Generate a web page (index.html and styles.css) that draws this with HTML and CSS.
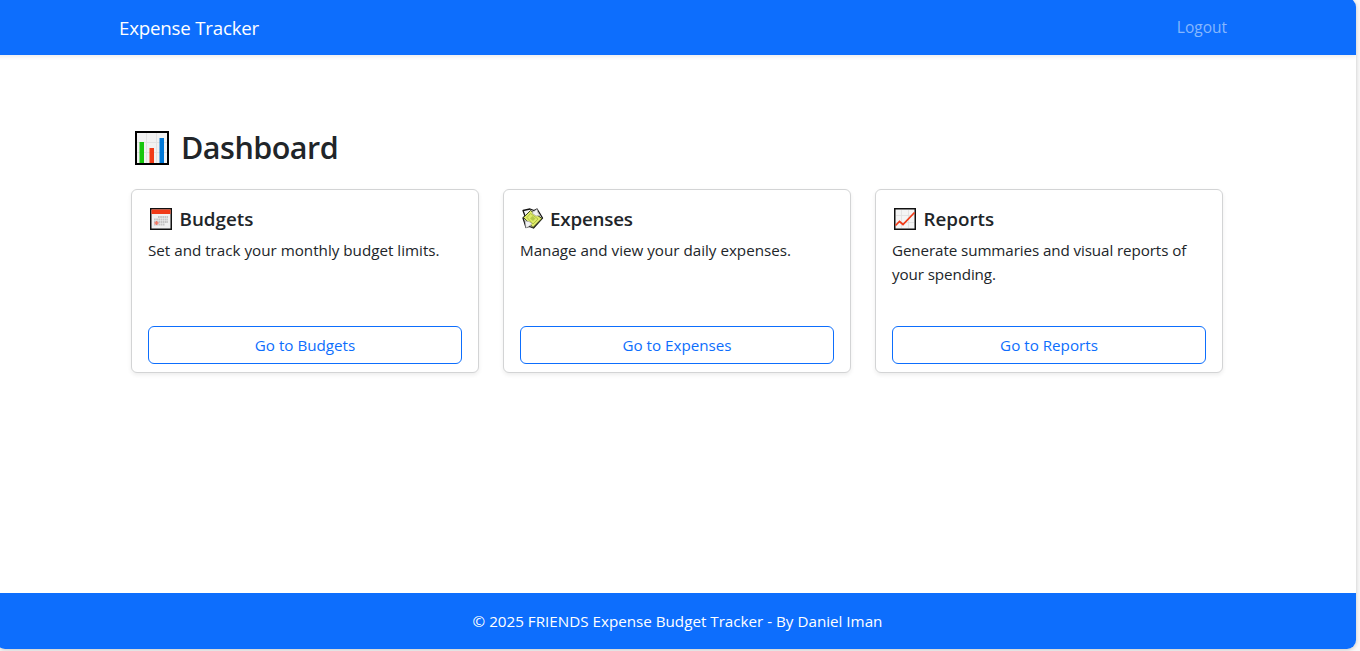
FILE: index.html
```html
<!DOCTYPE html>
<html lang="en">
<head>
<meta charset="utf-8">
<title>Expense Tracker</title>
<link rel="stylesheet" href="styles.css">
</head>
<body>
<div class="window">
  <header class="navbar">
    <a class="brand">Expense Tracker</a>
    <a class="logout">Logout</a>
  </header>
  <main class="content">
    <h1 class="title">
      <svg class="title-icon" viewBox="0 0 34 34">
        <rect width="34" height="34" fill="#000"/><rect x="2" y="2" width="30" height="30" fill="#f1f1f1"/>
        <path d="M11.5 2v30M21.5 2v30M2 11.5h30M2 21.5h30" stroke="#e2e2e2"/>
        <path d="M4.5 11H9v21H4.5z" fill="#16c60c"/><path d="M14.5 17H19v15h-4.5z" fill="#f03a17"/><path d="M24.5 7H29v25h-4.5z" fill="#0078d7"/>
      </svg>
      <span>Dashboard</span>
    </h1>
    <div class="cards">
      <section class="card">
        <h2 class="card-title">
          <svg class="card-icon" viewBox="0 0 22 22">
            <rect x=".75" y=".75" width="20.5" height="20.5" fill="#f0f0f0" stroke="#111" stroke-width="1.5"/>
            <path d="M1.500 1.500h19V6h-19z" fill="#f03a17"/>
            <path d="M8 9h10M4 11.500h14M4 14h14M4 16.500h11" stroke="#c4c4c4" stroke-width="2" stroke-dasharray="1.700 .5"/>
            <path d="M6.500 13v4M4.500 15h4" stroke="#f27662" stroke-width="1.500"/>
          </svg>
          <span>Budgets</span>
        </h2>
        <p class="text">Set and track your monthly budget limits.</p>
        <a class="button">Go to Budgets</a>
      </section>
      <section class="card">
        <h2 class="card-title money">
          <svg class="card-icon" viewBox="0 0 22 22">
            <path d="M1 2.500L8 1l4 1.500 3-1.500 2.500 4 3 5-9 10-4-1.500-3.500 1-1.500-5L1 10l2-2z" fill="#f4f4f4" stroke="#111" stroke-width="1.300" stroke-linejoin="round"/>
            <path d="M8.500 2.500L20 10.500l-9 9L1.500 9.500z" fill="#dfeb69" stroke="#3d451c" stroke-width="1" stroke-linejoin="round"/>
            <path d="M8.500 5.500l7.500 5.500-5 5-6-6.500z" fill="none" stroke="#a4b63b" stroke-width=".8"/>
            <path d="M10.500 8l3 2.500-2.500 2.500-3-2.500z" fill="#b5c94a"/>
            <path d="M10 5l5-4 1 4 2 2.500-4 .5zM3 13l4 .5 3 2-2.500 2.500L4 20z" fill="#f2f2f2" stroke="#999" stroke-width=".6"/>
          </svg>
          <span>Expenses</span>
        </h2>
        <p class="text">Manage and view your daily expenses.</p>
        <a class="button">Go to Expenses</a>
      </section>
      <section class="card">
        <h2 class="card-title">
          <svg class="card-icon" viewBox="0 0 22 22">
            <rect x=".75" y=".75" width="20.5" height="20.5" fill="#f4f4f4" stroke="#111" stroke-width="1.5"/>
            <path d="M7.500 2v18M14.500 2v18M2 7.500h18M2 14.500h18" stroke="#dedede" stroke-width=".8"/>
            <path d="M1.500 17.500l4-4 3.500 3L20.500 4.500" fill="none" stroke="#f03a17" stroke-width="1.700"/>
          </svg>
          <span>Reports</span>
        </h2>
        <p class="text report-text">Generate summaries and visual reports of your spending.</p>
        <a class="button">Go to Reports</a>
      </section>
    </div>
  </main>
  <footer class="footer">© 2025 FRIENDS Expense Budget Tracker - By Daniel Iman</footer>
</div>
</body>
</html>
```
FILE: styles.css
```css
* { box-sizing: border-box; }
body {
  margin: 0;
  height: 651px;
  overflow: hidden;
  background: #f8f8f8;
  color: #212529;
  font: 15.2px/24px "Segoe UI", "Open Sans", sans-serif;
}
.window {
  width: 1360px;
  height: 651px;
  margin: -2px 0 0 -4px;
  display: flex;
  flex-direction: column;
  overflow: hidden;
  border-radius: 9px;
  background: #fff;
  box-shadow: 0 1px 4px rgba(0, 0, 0, .2);
}
.navbar {
  height: 57px;
  flex: none;
  display: flex;
  align-items: center;
  justify-content: space-between;
  padding: 2px 129px 0 123px;
  background: #0d6efd;
  box-shadow: 0 2px 4px rgba(0, 0, 0, .075);
}
.brand { color: #fff; font-size: 18.7px; letter-spacing: -.2px; }
.logout { color: #86b7fe; font-size: 15.5px; line-height: 23px; padding-bottom: 1px; }
.content { flex: 1; padding: 69px 133px 0 135px; }
.title {
  display: flex;
  align-items: center;
  gap: 12px;
  height: 48px;
  margin: 0 0 17px 4px;
  font-size: 30.5px;
  font-weight: 600;
  line-height: 46px;
  letter-spacing: -.5px;
}
.title span { padding-bottom: 2px; }
.title-icon { width: 34px; height: 34px; flex: none; }
.cards { display: grid; grid-template-columns: repeat(3, 348px); gap: 24px; }
.card {
  height: 184px;
  display: flex;
  flex-direction: column;
  padding: 15px 16px 8px;
  border: 1px solid #d3d4d5;
  border-radius: 6px;
  background: #fff;
  box-shadow: 0 2px 4px rgba(0, 0, 0, .075);
}
.card-title {
  display: flex;
  align-items: center;
  gap: 7.5px;
  height: 27px;
  margin: 0 0 6px 2px;
  font-size: 18.8px;
  font-weight: 600;
  line-height: 24px;
}
.card-title.money { gap: 6px; letter-spacing: -.2px; }
.card-icon { width: 22px; height: 22px; flex: none; }
.text { margin: 0; }
.report-text { letter-spacing: -.1px; }
.button {
  height: 38px;
  margin-top: auto;
  border: 1px solid #0d6efd;
  border-radius: 6px;
  color: #0d6efd;
  line-height: 37px;
  text-align: center;
}
.footer {
  height: 56px;
  flex: none;
  padding-left: 3px;
  background: #0d6efd;
  color: #fff;
  line-height: 57px;
  text-align: center;
}
```
